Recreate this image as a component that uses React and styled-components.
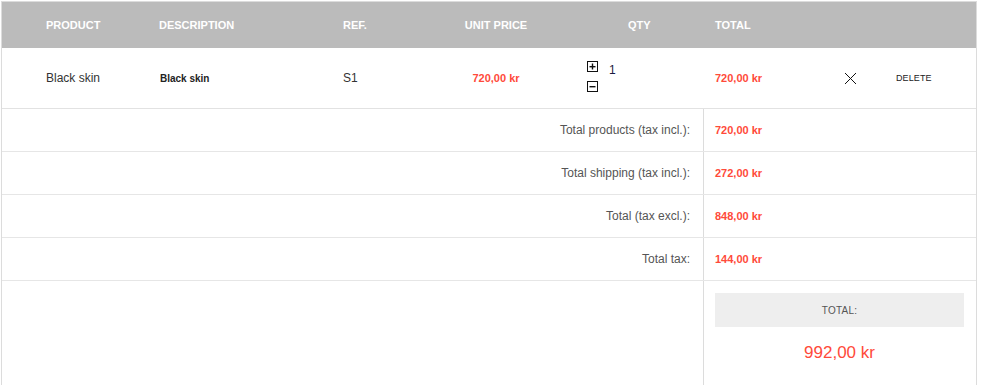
import React from 'react'
import styled, { createGlobalStyle } from 'styled-components'

const GlobalStyle = createGlobalStyle`
  body {
    margin: 0;
    background: #fff;
    font-family: "Liberation Sans", Arial, sans-serif;
  }
`;

const Page = styled.div`
  padding: 1px 0 0 1px;
`;

const Cart = styled.div`
  width: 974px;
  height: 400px;
  border: 1px solid #dcdcdc;
  border-bottom: none;
`;

// product, description, ref, unit price, qty, total, remove, delete
const columns = '113px 184px 109px 88px 175px 105px 60px 1fr';

const HeadRow = styled.div`
  display: grid;
  grid-template-columns: ${columns};
  height: 46px;
  align-items: center;
  padding-left: 44px;
  background: #bbbbbb;
`;

const HeadCell = styled.div`
  color: #fff;
  font-size: 11px;
  font-weight: 700;
  text-transform: uppercase;
  text-align: ${(p) => p.$align || 'left'};
  padding-left: ${(p) => p.$pad || 0}px;
`;

const ItemRow = styled.div`
  display: grid;
  grid-template-columns: ${columns};
  height: 60px;
  align-items: center;
  padding-left: 44px;
  border-bottom: 1px solid #e2e2e2;
`;

const Cell = styled.div`
  font-size: 12px;
  color: #333;
  text-align: ${(p) => p.$align || 'left'};
  padding-left: ${(p) => p.$pad || 0}px;
`;

const DescCell = styled(Cell)`
  font-size: 10px;
  font-weight: 700;
  color: #222;
`;

const Price = styled.span`
  color: #ff4a3a;
  font-size: 11px;
  font-weight: 700;
`;

const QtyBox = styled.div`
  display: flex;
  align-items: flex-start;
  gap: 11px;
  padding-left: 47px;
  margin-top: -4px;
`;

const QtyButtons = styled.div`
  display: flex;
  flex-direction: column;
  gap: 9px;
`;

const QtyValue = styled.span`
  font-size: 12px;
  color: #1a1a40;
  line-height: 12px;
  margin-top: 3px;
`;

const RemoveCell = styled.div`
  display: flex;
  justify-content: center;
`;

const DeleteLink = styled.span`
  font-size: 9px;
  color: #222;
  padding-left: 16px;
  letter-spacing: 0.1px;
`;

const SumRow = styled.div`
  display: grid;
  grid-template-columns: 701px 1fr;
  height: ${(p) => (p.$last ? '110px' : '42px')};
  border-bottom: ${(p) => (p.$last ? 'none' : '1px solid #e6e6e6')};
`;

const SumLabel = styled.div`
  display: flex;
  align-items: center;
  justify-content: flex-end;
  padding-right: 13px;
  font-size: 12px;
  color: #555;
`;

const SumValue = styled.div`
  display: flex;
  align-items: center;
  padding-left: 11px;
  border-left: 1px solid #dcdcdc;
`;

const GrandCell = styled.div`
  display: flex;
  flex-direction: column;
  padding: 12px 12px 0 11px;
  border-left: 1px solid #dcdcdc;
`;

const GrandLabel = styled.div`
  height: 34px;
  display: flex;
  align-items: center;
  justify-content: center;
  background: #eeeeee;
  font-size: 10px;
  color: #555;
  letter-spacing: 0.2px;
`;

const GrandPrice = styled.div`
  margin-top: 16px;
  text-align: center;
  color: #ff4a3a;
  font-size: 17px;
`;

function QtyButton({ minus }) {
  return (
    <svg width="11" height="11" viewBox="0 0 11 11">
      <rect x="0.5" y="0.5" width="10" height="10" fill="none" stroke="#111" />
      <rect x="2.5" y="5" width="6" height="1.4" fill="#111" />
      {!minus && <rect x="4.8" y="2.5" width="1.4" height="6" fill="#111" />}
    </svg>
  );
}

function Cross() {
  return (
    <svg width="13" height="13" viewBox="0 0 13 13">
      <path d="M1 1 L12 12 M12 1 L1 12" stroke="#111" strokeWidth="1" />
    </svg>
  );
}

const summary = [
  ['Total products (tax incl.):', '720,00 kr'],
  ['Total shipping (tax incl.):', '272,00 kr'],
  ['Total (tax excl.):', '848,00 kr'],
  ['Total tax:', '144,00 kr'],
];

export default function App() {
  return (
    <Page>
      <GlobalStyle />
      <Cart>
        <HeadRow>
          <HeadCell>Product</HeadCell>
          <HeadCell>Description</HeadCell>
          <HeadCell>Ref.</HeadCell>
          <HeadCell $align="center">Unit price</HeadCell>
          <HeadCell $pad={88}>Qty</HeadCell>
          <HeadCell>Total</HeadCell>
          <span />
          <span />
        </HeadRow>
        <ItemRow>
          <Cell>Black skin</Cell>
          <DescCell $pad={1}>Black skin</DescCell>
          <Cell>S1</Cell>
          <Cell $align="center">
            <Price>720,00 kr</Price>
          </Cell>
          <QtyBox>
            <QtyButtons>
              <QtyButton />
              <QtyButton minus />
            </QtyButtons>
            <QtyValue>1</QtyValue>
          </QtyBox>
          <Cell>
            <Price>720,00 kr</Price>
          </Cell>
          <RemoveCell>
            <Cross />
          </RemoveCell>
          <DeleteLink>DELETE</DeleteLink>
        </ItemRow>
        {summary.map(([label, value]) => (
          <SumRow key={label}>
            <SumLabel>{label}</SumLabel>
            <SumValue>
              <Price>{value}</Price>
            </SumValue>
          </SumRow>
        ))}
        <SumRow $last>
          <span />
          <GrandCell>
            <GrandLabel>TOTAL:</GrandLabel>
            <GrandPrice>992,00 kr</GrandPrice>
          </GrandCell>
        </SumRow>
      </Cart>
    </Page>
  );
}
